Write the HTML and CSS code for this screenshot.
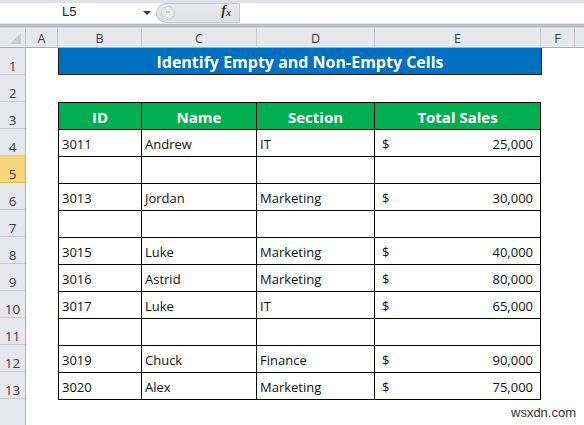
FILE: index.html
```html
<!DOCTYPE html>
<html>
<head>
<meta charset="utf-8">
<link rel="stylesheet" href="styles.css">
</head>
<body>
<div class="app">
  <div class="fbar">
    <div class="namebox"><span class="nm">L5</span><span class="dd"></span></div>
    <div class="fxpill"><span class="knob"></span><span class="fx">f<sub>x</sub></span></div>
    <div class="finput"></div>
  </div>
  <div class="sheet">
    <div class="corner"><span class="tri"></span></div>
    <div class="colheads">
      <div class="ch w-a">A</div>
      <div class="ch w-b">B</div>
      <div class="ch w-c">C</div>
      <div class="ch w-d">D</div>
      <div class="ch w-e">E</div>
      <div class="ch w-f">F</div>
      <div class="ch w-g"></div>
    </div>
    <div class="rowheads">
      <div class="rh">1</div>
      <div class="rh">2</div>
      <div class="rh">3</div>
      <div class="rh">4</div>
      <div class="rh sel">5</div>
      <div class="rh">6</div>
      <div class="rh">7</div>
      <div class="rh">8</div>
      <div class="rh">9</div>
      <div class="rh">10</div>
      <div class="rh">11</div>
      <div class="rh">12</div>
      <div class="rh">13</div>
      <div class="rh last"></div>
    </div>
    <div class="cells">
      <div class="title">Identify Empty and Non-Empty Cells</div>
      <div class="spacer"></div>
      <div class="tbl">
        <div class="hd">ID</div><div class="hd">Name</div><div class="hd">Section</div><div class="hd">Total Sales</div>

        <div class="c">3011</div><div class="c">Andrew</div><div class="c">IT</div><div class="c acc"><span>$</span><span>25,000</span></div>
        <div class="c"></div><div class="c"></div><div class="c"></div><div class="c"></div>
        <div class="c">3013</div><div class="c">Jordan</div><div class="c">Marketing</div><div class="c acc"><span>$</span><span>30,000</span></div>
        <div class="c"></div><div class="c"></div><div class="c"></div><div class="c"></div>
        <div class="c">3015</div><div class="c">Luke</div><div class="c">Marketing</div><div class="c acc"><span>$</span><span>40,000</span></div>
        <div class="c">3016</div><div class="c">Astrid</div><div class="c">Marketing</div><div class="c acc"><span>$</span><span>80,000</span></div>
        <div class="c">3017</div><div class="c">Luke</div><div class="c">IT</div><div class="c acc"><span>$</span><span>65,000</span></div>
        <div class="c"></div><div class="c"></div><div class="c"></div><div class="c"></div>
        <div class="c">3019</div><div class="c">Chuck</div><div class="c">Finance</div><div class="c acc"><span>$</span><span>90,000</span></div>
        <div class="c">3020</div><div class="c">Alex</div><div class="c">Marketing</div><div class="c acc"><span>$</span><span>75,000</span></div>
      </div>
    </div>
  </div>
  <div class="wm">wsxdn.com</div>
</div>
</body>
</html>
```

FILE: styles.css
```css
* { box-sizing: border-box; }
html, body { margin: 0; padding: 0; }
body {
  width: 584px;
  height: 425px;
  overflow: hidden;
  background: #ffffff;
  font-family: "Open Sans", "Noto Sans", sans-serif;
}
.app {
  position: relative;
  width: 584px;
  height: 425px;
  display: flex;
  flex-direction: column;
}

/* formula bar */
.fbar {
  height: 28px;
  flex: none;
  display: flex;
  align-items: flex-start;
  padding-top: 3px;
  background: linear-gradient(#dfe3e8 0, #dfe3e8 3px, #ffffff 3px);
  position: relative;
}
.fbar::after {
  content: "";
  position: absolute;
  left: 0; right: 0;
  top: 23px;
  height: 3px;
  border-top: 1px solid #e4e6ea;
  background: #b9bcc1;
  border-bottom: 1px solid #d0d3d8;
}
.namebox {
  width: 156px;
  height: 20px;
  display: flex;
  align-items: center;
  background: #fff;
  position: relative;
}
.nm {
  position: absolute;
  left: 62px;
  top: 1px;
  font-family: "Liberation Sans", sans-serif;
  font-size: 13px;
  color: #222;
}
.dd {
  position: absolute;
  left: 143px;
  top: 8px;
  width: 0; height: 0;
  border-left: 4px solid transparent;
  border-right: 4px solid transparent;
  border-top: 4px solid #333;
}
.fxpill {
  width: 84px;
  height: 20px;
  background: linear-gradient(#e9ebee, #dcdfe3);
  border: 1px solid #c4c7cc;
  border-right: 1px solid #c9ccd0;
  border-radius: 11px 0 0 11px;
  position: relative;
}
.knob {
  position: absolute;
  left: 4px;
  top: 2px;
  width: 14px;
  height: 14px;
  border-radius: 50%;
  background: radial-gradient(circle at 50% 40%, #f6f7f8, #d7dadd);
  border: 1px solid #cfd2d6;
}
.knob::after {
  content: "";
  position: absolute;
  left: 4px; top: 4px;
  width: 4px; height: 2px;
  background: #c3c6ca;
  border-radius: 1px;
}
.fx {
  position: absolute;
  right: 8px;
  top: -1px;
  font-family: "Liberation Serif", serif;
  font-style: italic;
  font-weight: bold;
  font-size: 14px;
  color: #333;
}
.fx sub {
  font-size: 10px;
  vertical-align: -1px;
}
.finput {
  flex: 1;
  height: 20px;
  background: #fff;
}

/* sheet */
.sheet {
  flex: 1;
  display: grid;
  grid-template-columns: 26px 1fr;
  grid-template-rows: 20px 1fr;
}
.corner {
  background: #e6e8eb;
  border-right: 1px solid #c6c9cd;
  border-bottom: 1px solid #a9acb0;
  position: relative;
}
.tri {
  position: absolute;
  right: 4px;
  bottom: 3px;
  width: 0; height: 0;
  border-left: 11px solid transparent;
  border-bottom: 11px solid #c9ccd0;
}
.colheads {
  display: flex;
  background: #e6e8eb;
  border-bottom: 1px solid #a9acb0;
}
.ch {
  flex: none;
  height: 100%;
  border-right: 1px solid #c6c9cd;
  display: flex;
  align-items: center;
  justify-content: center;
  font-size: 12.5px;
  color: #3c4046;
  padding-top: 1px;
}
.w-a { width: 32px; }
.w-b { width: 84px; }
.w-c { width: 115px; }
.w-d { width: 118px; }
.w-e { width: 166px; }
.w-f { width: 34px; }
.w-g { flex: 1; border-right: none; }

.rowheads {
  display: flex;
  flex-direction: column;
  background: #e6e8eb;
  border-right: 1px solid #a9acb0;
}
.rh {
  flex: none;
  height: 27px;
  border-bottom: 1px solid #c6c9cd;
  display: flex;
  align-items: center;
  justify-content: center;
  padding-top: 9px;
  font-size: 13.5px;
  color: #3c4046;
}
.rh.sel {
  background: #f8d679;
  color: #3c3c3c;
  border-bottom: 1px solid #e2b54e;
}
.rh.last { flex: 1; border-bottom: none; }

.cells {
  padding-left: 32px;
  display: flex;
  flex-direction: column;
  align-items: flex-start;
}
.title {
  width: 484px;
  height: 27px;
  background: #0070c0;
  border: 1px solid #1a1a1a;
  border-top: none;
  color: #ffffff;
  font-weight: bold;
  font-size: 16px;
  display: flex;
  align-items: center;
  justify-content: center;
  padding-top: 1px;
}
.spacer { height: 27px; }
.tbl {
  display: grid;
  grid-template-columns: 83px 115px 118px 166px;
  grid-auto-rows: 27px;
  border-left: 1px solid #000;
  border-top: 1px solid #000;
}
.tbl > div {
  border-right: 1px solid #000;
  border-bottom: 1px solid #000;
}
.hd {
  background: #00b050;
  color: #ffffff;
  font-weight: bold;
  font-size: 15px;
  display: flex;
  align-items: center;
  justify-content: center;
  padding-top: 1px;
}
.c {
  font-size: 13px;
  color: #111;
  display: flex;
  align-items: center;
  padding: 1px 3px 0 3px;
}
.c.acc {
  justify-content: space-between;
  padding-left: 7px;
  padding-right: 7px;
}

.wm {
  position: absolute;
  left: 511px;
  top: 405px;
  font-family: "Liberation Sans", sans-serif;
  font-size: 13px;
  color: #333;
}
```
